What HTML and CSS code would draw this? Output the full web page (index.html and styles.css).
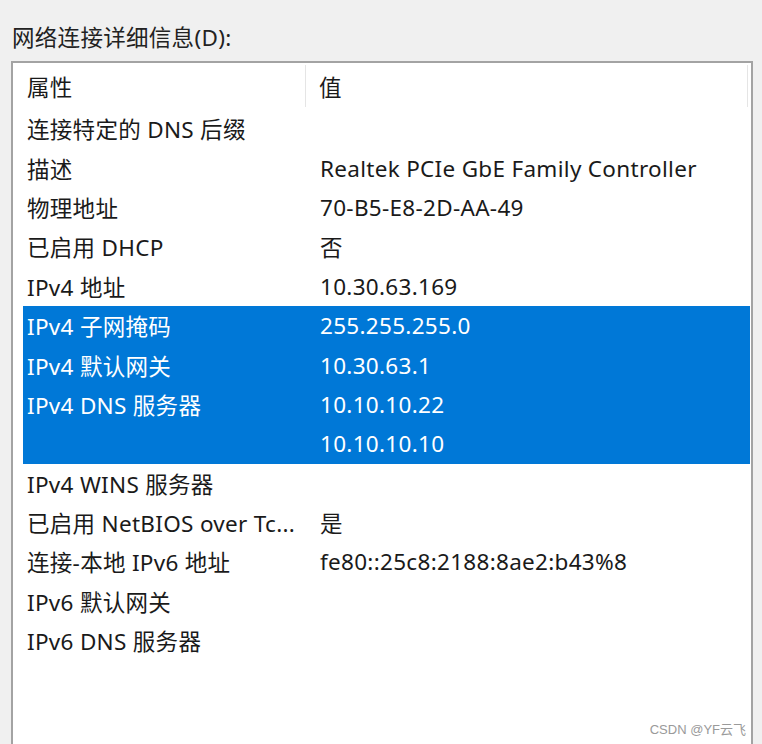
FILE: index.html
```html
<!DOCTYPE html>
<html lang="zh-CN">
<head>
<meta charset="utf-8">
<title>网络连接详细信息</title>
<link rel="stylesheet" href="styles.css">
</head>
<body>
<div class="dialog">
  <div class="title">网络连接详细信息(D):</div>
  <div class="listbox">
    <div class="header">
      <div class="hcell hprop">属性</div>
      <div class="hcell hval">值</div>
    </div>
    <div class="rows">
      <div class="row"><div class="prop">连接特定的 DNS 后缀</div><div class="val"></div></div>
      <div class="row"><div class="prop">描述</div><div class="val">Realtek PCIe GbE Family Controller</div></div>
      <div class="row"><div class="prop">物理地址</div><div class="val">70-B5-E8-2D-AA-49</div></div>
      <div class="row"><div class="prop">已启用 DHCP</div><div class="val">否</div></div>
      <div class="row"><div class="prop">IPv4 地址</div><div class="val">10.30.63.169</div></div>
      <div class="row sel"><div class="prop">IPv4 子网掩码</div><div class="val">255.255.255.0</div></div>
      <div class="row sel"><div class="prop">IPv4 默认网关</div><div class="val">10.30.63.1</div></div>
      <div class="row sel"><div class="prop">IPv4 DNS 服务器</div><div class="val">10.10.10.22</div></div>
      <div class="row sel"><div class="prop"></div><div class="val">10.10.10.10</div></div>
      <div class="row"><div class="prop">IPv4 WINS 服务器</div><div class="val"></div></div>
      <div class="row"><div class="prop">已启用 NetBIOS over Tc...</div><div class="val">是</div></div>
      <div class="row"><div class="prop">连接-本地 IPv6 地址</div><div class="val">fe80::25c8:2188:8ae2:b43%8</div></div>
      <div class="row"><div class="prop">IPv6 默认网关</div><div class="val"></div></div>
      <div class="row"><div class="prop">IPv6 DNS 服务器</div><div class="val"></div></div>
    </div>
    <div class="watermark">CSDN @YF云飞</div>
  </div>
</div>
</body>
</html>
```

FILE: styles.css
```css
html, body {
  margin: 0;
  padding: 0;
  background: #f0f0f0;
  height: 100%;
  overflow: hidden;
}

.dialog {
  display: flex;
  flex-direction: column;
  height: 744px;
  font-family: "Noto Sans", "Noto Sans CJK SC", sans-serif;
  font-size: 22.5px;
  letter-spacing: 0.3px;
  color: #1a1a1a;
}

.title {
  flex: none;
  padding: 26px 0 0 12px;
  height: 61px;
  box-sizing: border-box;
  line-height: 24px;
  color: #222;
}

.listbox {
  position: relative;
  flex: 1;
  margin-left: 11px;
  width: 742px;
  box-sizing: border-box;
  border: 2px solid #a3a3a3;
  border-bottom: none;
  background: #fff;
}

.header {
  display: flex;
  height: 46px;
  align-items: center;
}

.hcell {
  height: 42px;
  display: flex;
  align-items: center;
  box-sizing: border-box;
}

.hprop {
  width: 293px;
  padding-left: 14px;
  border-right: 1px solid #e5e5e5;
}

.hval {
  flex: 1;
  padding-left: 13px;
  border-right: 1px solid #e5e5e5;
  margin-right: 3px;
}

.rows {
  margin: 0 0 0 10px;
  width: 727px;
}

.row {
  display: flex;
  height: 39.4px;
  align-items: center;
  white-space: nowrap;
}

.row.sel {
  background: #0078d7;
  color: #fff;
}

.prop {
  width: 297px;
  padding-left: 4px;
  box-sizing: border-box;
  overflow: hidden;
}

.val {
  flex: 1;
}

.watermark {
  position: absolute;
  right: 5px;
  bottom: 6px;
  font-family: "Liberation Sans", Arial, "Noto Sans CJK SC", sans-serif;
  font-size: 13px;
  letter-spacing: 0;
  color: #9a9a9a;
}
```
